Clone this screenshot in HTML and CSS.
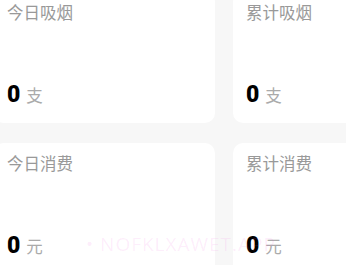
FILE: index.html
```html
<!DOCTYPE html>
<html lang="zh-CN">
<head>
    <meta charset="UTF-8">
    <title>吸烟统计</title>
    <link rel="stylesheet" href="styles.css">
</head>
<body>
<div class="stats">
    <div class="card">
        <div class="card-title">今日吸烟</div>
        <div class="card-value"><span class="num">0</span><span class="unit">支</span></div>
    </div>
    <div class="card">
        <div class="card-title">累计吸烟</div>
        <div class="card-value"><span class="num">0</span><span class="unit">支</span></div>
    </div>
    <div class="card">
        <div class="card-title">今日消费</div>
        <div class="card-value"><span class="num">0</span><span class="unit">元</span></div>
    </div>
    <div class="card">
        <div class="card-title">累计消费</div>
        <div class="card-value"><span class="num">0</span><span class="unit">元</span></div>
    </div>
</div>
<div class="watermark">• NOFKLXAWET.APP</div>
</body>
</html>
```

FILE: styles.css
```css
html,body{
    width: 100%;
    height: 100%;
    margin: 0;
    padding: 0;
    overflow: hidden;
    background-color: #f7f7f7;
    font-family: Roboto, "Noto Sans CJK SC", sans-serif;
}
.stats{
    display: grid;
    grid-template-columns: 221px 221px;
    grid-auto-rows: 131px;
    gap: 20px 18px;
    margin-top: -8px;
    margin-left: -6px;
}
.card{
    display: flex;
    flex-direction: column;
    justify-content: space-between;
    background-color: #fff;
    border-radius: 10px;
    padding: 14px 13px 17px;
}
.card-title{
    font-size: 16.5px;
    line-height: 1;
    color: #999;
}
.card-value{
    display: flex;
    align-items: baseline;
    line-height: 1;
}
.card-value .num{
    font-size: 23px;
    font-weight: 900;
    color: #000;
}
.card-value .unit{
    margin-left: 6px;
    font-size: 16.5px;
    color: #aaa;
}
.watermark{
    position: absolute;
    left: 86px;
    top: 231px;
    font-family: "Open Sans", sans-serif;
    font-size: 19px;
    letter-spacing: 1px;
    color: rgba(240, 80, 220, 0.1);
    pointer-events: none;
}
```
